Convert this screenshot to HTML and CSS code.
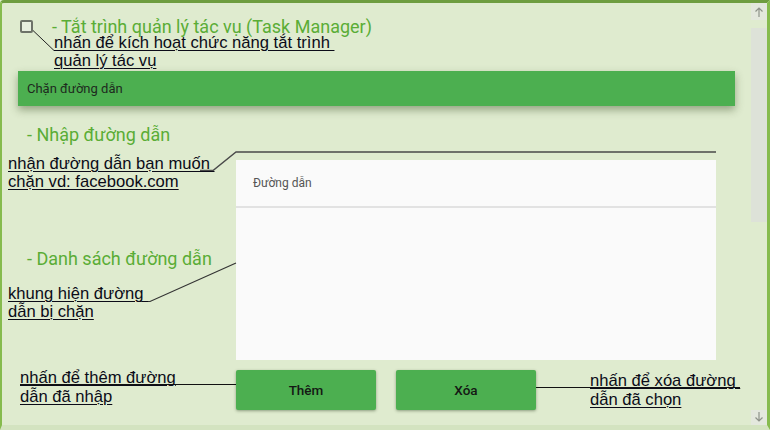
FILE: index.html
```html
<!DOCTYPE html>
<html lang="vi">
<head>
<meta charset="utf-8">
<title>Chặn đường dẫn</title>
<link rel="stylesheet" href="styles.css">
</head>
<body>
<div class="window">
  <div class="main">
    <div class="task-row">
      <span class="checkbox"></span>
      <span class="heading task-heading">- Tắt trình quản lý tác vụ (Task Manager)</span>
    </div>
    <div class="bar">Chặn đường dẫn</div>
    <div class="content">
      <div class="labels">
        <div class="heading h-input">- Nhập đường dẫn</div>
        <div class="heading h-list">- Danh sách đường dẫn</div>
      </div>
      <div class="panel">
        <div class="field">Đường dẫn</div>
        <div class="list"></div>
      </div>
    </div>
    <div class="buttons">
      <button class="btn">Thêm</button>
      <button class="btn">Xóa</button>
    </div>
  </div>
  <div class="scrollbar">
    <div class="sb-btn sb-up">
      <svg width="16" height="17" viewBox="0 0 16 17"><path d="M8 14V5M4.5 8.5L8 5l3.5 3.5" fill="none" stroke="#8e938a" stroke-width="1.2"/></svg>
    </div>
    <div class="sb-thumb"></div>
    <div class="sb-space"></div>
    <div class="sb-btn sb-down">
      <svg width="16" height="15" viewBox="0 0 16 15"><path d="M8 2v9M4.5 7.5L8 11l3.5-3.5" fill="none" stroke="#8e938a" stroke-width="1.2"/></svg>
    </div>
  </div>
</div>

<div class="notes">
  <svg class="connectors" width="770" height="430" viewBox="0 0 770 430">
    <path d="M33 30.5L54 50.5" stroke="#222" stroke-width="1" fill="none"/>
    <path d="M200 170.5L213 170.5L236 152L716 152" stroke="#4a4a4a" stroke-width="1.4" fill="none"/>
    <path d="M140 301.5L150 301.5L236 263" stroke="#333" stroke-width="1.2" fill="none"/>
    <path d="M20 384.5L236 384.5" stroke="#111" stroke-width="1" fill="none"/>
    <path d="M536 387.5L740 387.5" stroke="#111" stroke-width="1" fill="none"/>
  </svg>
  <div class="note n1"><u>nhấn để kích hoạt chức năng tắt trình </u><br><u>quản lý tác vụ</u></div>
  <div class="note n2"><u>nhận đường dẫn bạn muốn </u><br><u>chặn vd: facebook.com</u></div>
  <div class="note n3"><u>khung hiện đường </u><br><u>dẫn bị chặn</u></div>
  <div class="note n4"><u>nhấn để thêm đường</u><br><u>dẫn đã nhập</u></div>
  <div class="note n5"><u>nhấn để xóa đường </u><br><u>dẫn đã chọn</u></div>
</div>
</body>
</html>
```

FILE: styles.css
```css
html, body {
  margin: 0;
  padding: 0;
}
body {
  position: relative;
  width: 770px;
  height: 430px;
  overflow: hidden;
  background: #dfebcf;
  font-family: Roboto, "Noto Sans", sans-serif;
}
.window {
  box-sizing: border-box;
  width: 770px;
  height: 430px;
  display: flex;
  background: #dfebcf;
  border-top: 3px solid #6e9d40;
  border-left: 2px solid #86bb4e;
  border-right: 3px solid #86bb4e;
  border-bottom: 5px solid #d3e3c0;
  border-top-left-radius: 4px;
}
.main {
  flex: 1;
  display: flex;
  flex-direction: column;
}
.task-row {
  display: flex;
  align-items: center;
  height: 25px;
  padding: 11px 0 0 18px;
}
.checkbox {
  box-sizing: border-box;
  width: 13px;
  height: 13px;
  border: 2px solid #6d7268;
  border-radius: 2px;
  background: #e8efdf;
}
.heading {
  color: #5aad36;
  font-size: 18px;
  line-height: 22px;
  white-space: nowrap;
}
.task-heading {
  margin-left: 19px;
  line-height: 15px;
}
.bar {
  margin: 32px 16px 0 16px;
  height: 35px;
  background: #4caf50;
  color: #1e2a1e;
  font-size: 13px;
  display: flex;
  align-items: center;
  padding-left: 9px;
  box-shadow: 0 4px 8px rgba(60, 80, 40, 0.45);
}
.content {
  display: grid;
  grid-template-columns: 234px 480px;
}
.labels {
  padding-left: 25px;
}
.h-input {
  margin-top: 18px;
}
.h-list {
  margin-top: 102px;
}
.panel {
  margin-top: 54px;
  background: #fafafa;
}
.field {
  height: 46px;
  border-bottom: 2px solid #e2e2e2;
  display: flex;
  align-items: center;
  padding-left: 17px;
  font-size: 12px;
  color: #555;
}
.list {
  height: 152px;
}
.buttons {
  display: flex;
  gap: 20px;
  margin: 10px 0 0 234px;
}
.btn {
  width: 140px;
  height: 40px;
  border: none;
  border-radius: 2px;
  background: #4caf50;
  color: #141814;
  font-family: Roboto, sans-serif;
  font-size: 13.5px;
  font-weight: 500;
  box-shadow: 0 1px 3px rgba(40, 60, 30, 0.45);
  padding: 0;
}
.scrollbar {
  width: 16px;
  display: flex;
  flex-direction: column;
}
.sb-btn {
  background: #e3e8dd;
  display: flex;
}
.sb-up {
  height: 17px;
}
.sb-thumb {
  margin-top: 8px;
  height: 194px;
  background: #dde2d8;
}
.sb-space {
  flex: 1;
}
.sb-down {
  height: 15px;
}
.notes {
  position: absolute;
  left: 0;
  top: 0;
  width: 770px;
  height: 430px;
  pointer-events: none;
}
.connectors {
  position: absolute;
  left: 0;
  top: 0;
}
.note {
  position: absolute;
  font-family: "Liberation Sans", Arial, sans-serif;
  font-size: 16.6px;
  line-height: 18px;
  color: #0b0b18;
  white-space: pre;
}
.note u {
  text-decoration-thickness: 1px;
  text-underline-offset: 2px;
}
.n1 { left: 54px; top: 34px; }
.n2 { left: 8px; top: 155px; }
.n3 { left: 8px; top: 285px; }
.n4 { left: 20px; top: 368px; line-height: 19px; }
.n5 { left: 590px; top: 371px; line-height: 19px; }
```
